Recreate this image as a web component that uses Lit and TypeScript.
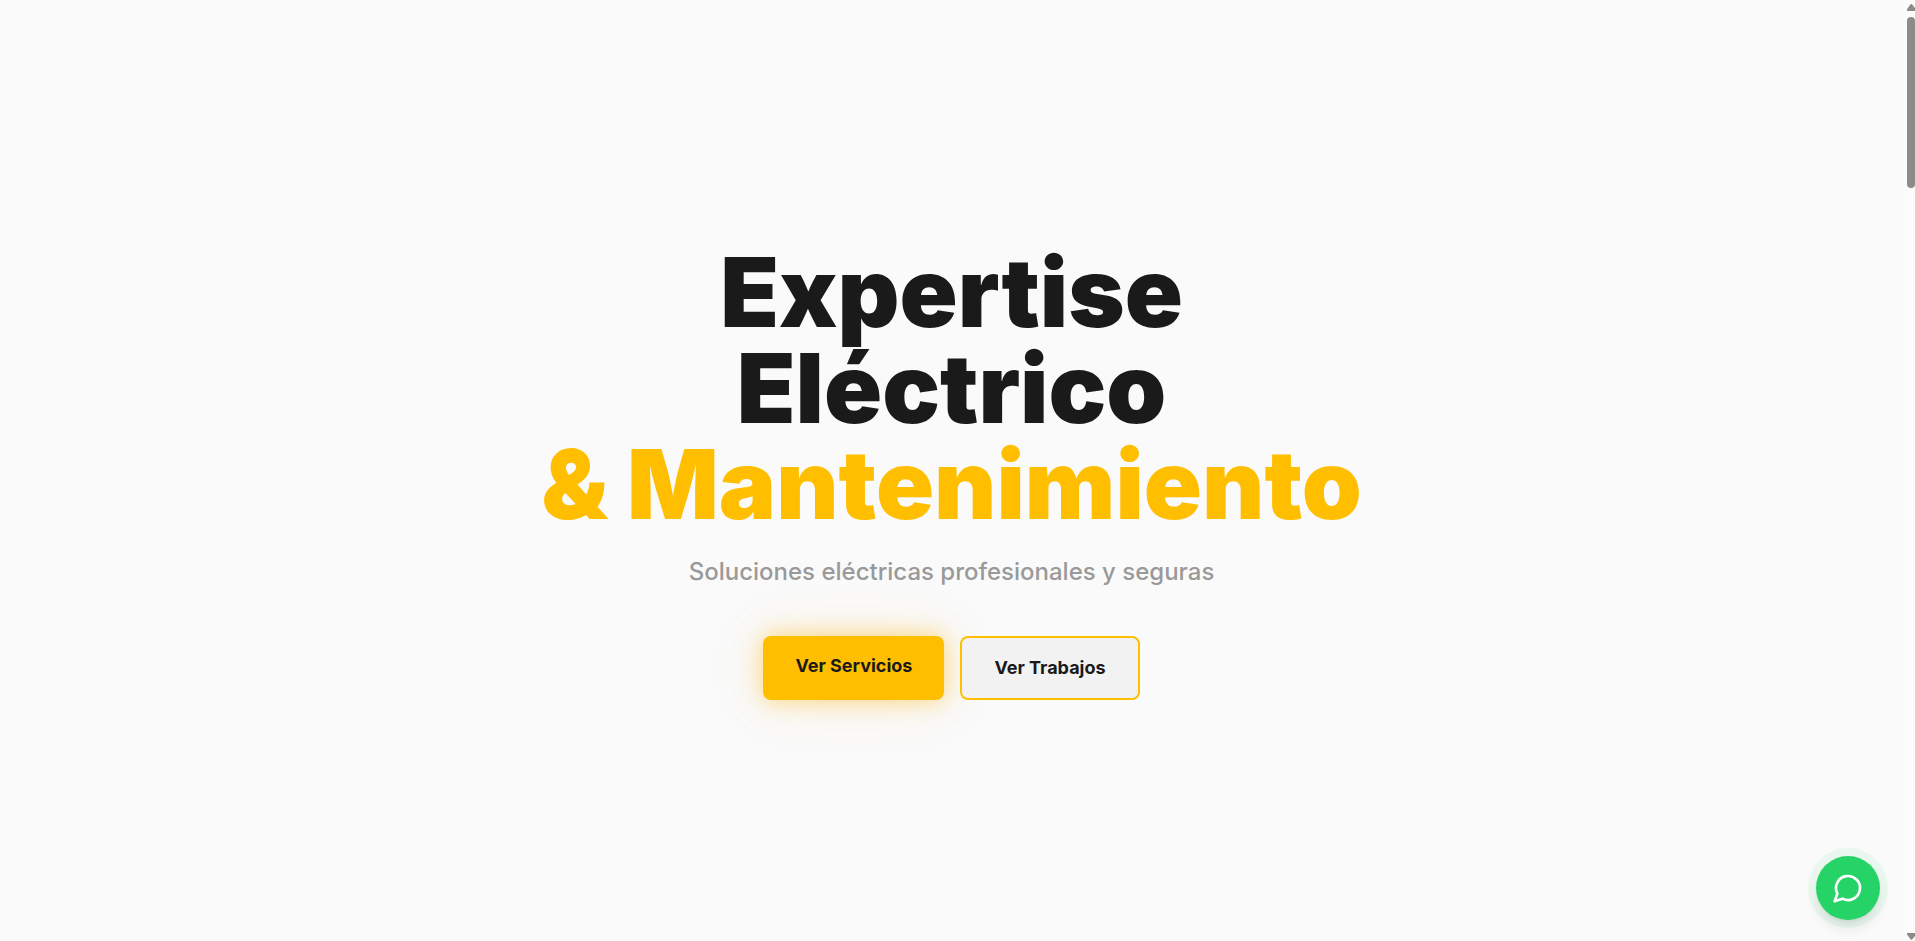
import { LitElement, html, css } from "lit";
import { customElement } from "lit/decorators.js";

@customElement("chat-button")
class ChatButton extends LitElement {
  static styles = css`
    .fab {
      display: flex;
      align-items: center;
      justify-content: center;
      width: 64px;
      height: 64px;
      border-radius: 50%;
      background: #25d366;
      color: #fff;
      box-shadow: 0 10px 15px -3px rgba(0, 0, 0, 0.1), 0 4px 6px -4px rgba(0, 0, 0, 0.1),
        0 0 0 8px rgba(37, 211, 102, 0.08);
    }
  `;

  render() {
    return html`
      <a class="fab" href="#whatsapp" aria-label="WhatsApp">
        <svg width="32" height="32" viewBox="0 0 24 24" fill="none" stroke="currentColor"
          stroke-width="2" stroke-linecap="round" stroke-linejoin="round" aria-hidden="true">
          <path d="M7.9 20A9 9 0 1 0 4 16.1L2 22Z" />
        </svg>
      </a>
    `;
  }
}

@customElement("scroll-rail")
class ScrollRail extends LitElement {
  static styles = css`
    :host {
      display: flex;
      flex-direction: column;
      align-items: flex-end;
      box-sizing: border-box;
      width: 12px;
      padding-top: 4px;
      background: #fcfcfc;
      color: #8b8b8a;
    }
    svg {
      display: block;
      fill: currentColor;
    }
    .track {
      flex: 1;
      width: 8px;
      padding-top: 6px;
    }
    .thumb {
      height: 18.7%;
      border-radius: 4px;
      background: currentColor;
    }
  `;

  render() {
    return html`
      <svg width="8" height="7" viewBox="0 0 8 7" aria-hidden="true">
        <path d="M0 7V5.2L3 .9Q4.3-.7 5.6.9L8 4V7Z" />
      </svg>
      <div class="track"><div class="thumb"></div></div>
      <svg width="8" height="8" viewBox="0 0 8 8" aria-hidden="true">
        <path d="M0 0H8V3L5.4 6.2Q4.5 7.4 3.6 6.2L0 1.6Z" />
      </svg>
    `;
  }
}

@customElement("app-root")
class AppRoot extends LitElement {
  static styles = css`
    :host {
      display: flex;
      height: 100vh;
      overflow: hidden;
      background: #fafafa;
      color: #1a1a1a;
      font-family: Inter, "Liberation Sans", sans-serif;
    }
    .hero {
      flex: 1;
      display: flex;
      flex-direction: column;
      align-items: center;
      justify-content: center;
      padding-top: 3px;
      text-align: center;
    }
    .title {
      margin: 0 0 24px;
      font-size: 96px;
      line-height: 96px;
      font-weight: 900;
    }
    .line {
      display: block;
    }
    .accent {
      color: #ffbf00;
    }
    .subtitle {
      margin: 0 0 48px;
      font-size: 24px;
      line-height: 32px;
      font-weight: 500;
      color: #999;
    }
    .actions {
      display: flex;
      gap: 16px;
    }
    .action {
      padding: 16px 32px;
      border-radius: 8px;
      font-size: 18px;
      line-height: 28px;
      font-weight: 700;
      color: inherit;
      text-decoration: none;
    }
    .primary {
      background: #ffbf00;
      box-shadow: 0 0 24px rgba(255, 180, 0, 0.5), 0 0 60px rgba(255, 180, 0, 0.1);
    }
    .secondary {
      border: 2px solid #ffbf00;
      background: #f2f2f2;
    }
    .chat {
      position: fixed;
      right: 35px;
      bottom: 21px;
    }
  `;

  render() {
    return html`
      <main class="hero">
        <h1 class="title">
          <span class="line">Expertise</span>
          <span class="line">Eléctrico</span>
          <span class="line accent">&amp; Mantenimiento</span>
        </h1>
        <p class="subtitle">Soluciones eléctricas profesionales y seguras</p>
        <div class="actions">
          <a class="action primary" href="#servicios">Ver Servicios</a>
          <a class="action secondary" href="#trabajos">Ver Trabajos</a>
        </div>
      </main>
      <scroll-rail></scroll-rail>
      <chat-button class="chat"></chat-button>
    `;
  }
}
